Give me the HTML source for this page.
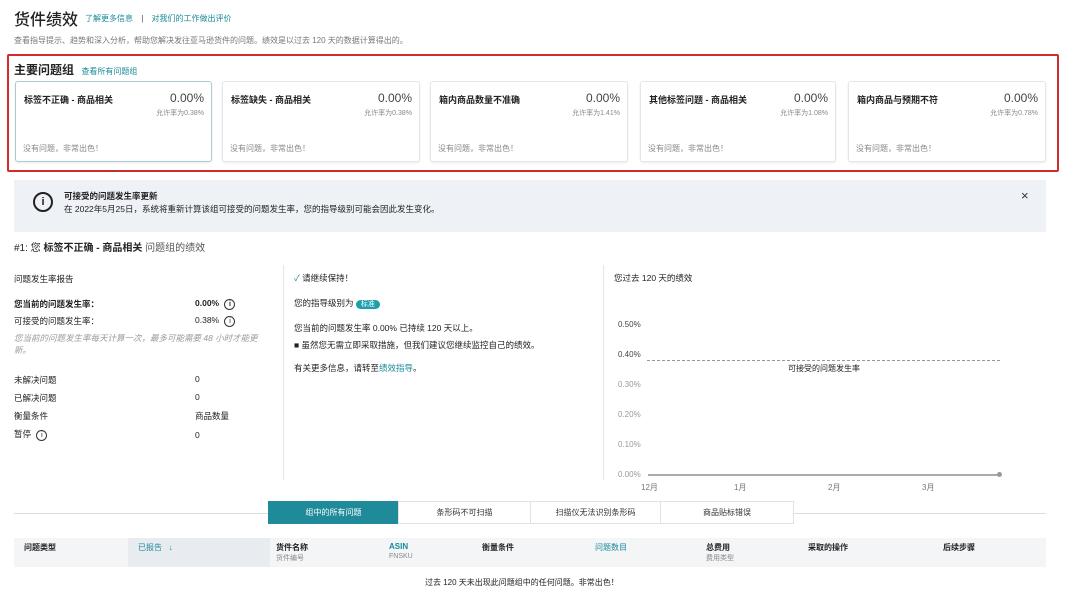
<!DOCTYPE html>
<html><head><meta charset="utf-8"><style>
*{margin:0;padding:0;box-sizing:border-box}
body{width:1080px;height:592px;background:#fff;font-family:"Liberation Sans","Noto Sans CJK SC",sans-serif;color:#222;position:relative;overflow:hidden;font-size:9px}
.a{position:absolute;white-space:nowrap}
.t{color:#1a8a99}
.g{color:#777}
.card{position:absolute;top:81px;height:81px;border:1px solid #e4e6e8;border-radius:3px;box-shadow:0 1px 2px rgba(0,0,0,.08);background:#fff}
.card .n{position:absolute;left:8px;top:11px;font-weight:bold;font-size:9px}
.card .p{position:absolute;right:7px;top:9px;font-size:12px;color:#444}
.card .s{position:absolute;right:7px;top:26px;font-size:7px;color:#888}
.card .f{position:absolute;left:7px;bottom:7px;font-size:8px;color:#888}
.vl{position:absolute;width:1px;background:#e6e6e6}
.tab{position:absolute;top:501px;height:23px;border:1px solid #e2e2e2;background:#fff;font-size:8px;text-align:center;line-height:22px;color:#333}
.th{position:absolute;top:542px;font-size:8px;font-weight:bold}
.ax{position:absolute;left:618px;font-size:8px;color:#999}
.l{font-size:8.5px}
</style></head><body>
<div class="a" style="left:14px;top:6px;font-size:16px;font-weight:500">货件绩效</div>
<div class="a t" style="left:85px;top:13px;font-size:8px">了解更多信息 <span style="color:#444;margin:0 6px">|</span> 对我们的工作做出评价</div>
<div class="a g" style="left:14px;top:35px;font-size:8px">查看指导提示、趋势和深入分析，帮助您解决发往亚马逊货件的问题。绩效是以过去 120 天的数据计算得出的。</div>

<div class="a" style="left:7px;top:54px;width:1052px;height:118px;border:2px solid #d22b2b;border-radius:2px"></div>
<div class="a" style="left:14px;top:61px;font-size:12px;font-weight:bold">主要问题组 <span class="t" style="font-size:8px;font-weight:normal;margin-left:4px">查看所有问题组</span></div>
<div class="card" style="left:15px;width:197px;border-color:#a9cdd0"><div class="n">标签不正确 - 商品相关</div><div class="p">0.00%</div><div class="s">允许率为0.38%</div><div class="f">没有问题，非常出色！</div></div>
<div class="card" style="left:222px;width:198px"><div class="n">标签缺失 - 商品相关</div><div class="p">0.00%</div><div class="s">允许率为0.38%</div><div class="f">没有问题，非常出色！</div></div>
<div class="card" style="left:430px;width:198px"><div class="n">箱内商品数量不准确</div><div class="p">0.00%</div><div class="s">允许率为1.41%</div><div class="f">没有问题，非常出色！</div></div>
<div class="card" style="left:640px;width:196px"><div class="n">其他标签问题 - 商品相关</div><div class="p">0.00%</div><div class="s">允许率为1.08%</div><div class="f">没有问题，非常出色！</div></div>
<div class="card" style="left:848px;width:198px"><div class="n">箱内商品与预期不符</div><div class="p">0.00%</div><div class="s">允许率为0.78%</div><div class="f">没有问题，非常出色！</div></div>
<div class="a" style="left:110px;top:165px;font-size:8px;color:#555">⌄</div>

<div class="a" style="left:14px;top:180px;width:1032px;height:52px;background:#eef1f5"></div>
<div class="a" style="left:33px;top:192px;width:20px;height:20px;border:2px solid #222;border-radius:50%;text-align:center;font-weight:bold;font-size:11px;line-height:16px">i</div>
<div class="a" style="left:64px;top:190px;font-size:8.5px;font-weight:bold">可接受的问题发生率更新</div>
<div class="a" style="left:64px;top:203px;font-size:8.5px">在 2022年5月25日，系统将重新计算该组可接受的问题发生率，您的指导级别可能会因此发生变化。</div>
<div class="a" style="left:1021px;top:188px;font-size:13px;color:#333">×</div>

<div class="a" style="left:14px;top:239px;font-size:10px">#1: 您 <b>标签不正确 - 商品相关</b> <span style="color:#555">问题组的绩效</span></div>
<div class="vl" style="left:283px;top:265px;height:215px"></div>
<div class="vl" style="left:603px;top:265px;height:215px"></div>

<div class="a l" style="left:14px;top:273px">问题发生率报告</div>
<div class="a l" style="left:14px;top:298px;font-weight:bold">您当前的问题发生率：</div>
<div class="a l" style="left:195px;top:298px;font-weight:bold">0.00% <span style="display:inline-block;width:11px;height:11px;border:1px solid #333;border-radius:50%;font-size:7px;text-align:center;line-height:9px;margin-left:3px">i</span></div>
<div class="a l" style="left:14px;top:315px">可接受的问题发生率：</div>
<div class="a l" style="left:195px;top:315px">0.38% <span style="display:inline-block;width:11px;height:11px;border:1px solid #333;border-radius:50%;font-size:7px;text-align:center;line-height:9px;margin-left:3px">i</span></div>
<div class="a l" style="left:14px;top:332px;color:#999;font-style:italic;white-space:normal;width:252px;line-height:12px">您当前的问题发生率每天计算一次，最多可能需要 48 小时才能更新。</div>
<div class="a l" style="left:14px;top:374px">未解决问题</div><div class="a l" style="left:195px;top:374px">0</div>
<div class="a l" style="left:14px;top:392px">已解决问题</div><div class="a l" style="left:195px;top:392px">0</div>
<div class="a l" style="left:14px;top:410px">衡量条件</div><div class="a l" style="left:195px;top:410px">商品数量</div>
<div class="a l" style="left:14px;top:428px">暂停 <span style="display:inline-block;width:11px;height:11px;border:1px solid #333;border-radius:50%;font-size:7px;text-align:center;line-height:9px;margin-left:3px">i</span></div><div class="a l" style="left:195px;top:430px">0</div>

<div class="a l" style="left:294px;top:272px"><span style="color:#1a8a99">✓</span> 请继续保持！</div>
<div class="a l" style="left:294px;top:297px">您的指导级别为 <span style="background:#1aa0ad;color:#fff;border-radius:7px;padding:1px 5px;font-size:7px">标准</span></div>
<div class="a l" style="left:294px;top:322px">您当前的问题发生率 0.00% 已持续 120 天以上。</div>
<div class="a l" style="left:294px;top:339px">■ 虽然您无需立即采取措施，但我们建议您继续监控自己的绩效。</div>
<div class="a l" style="left:294px;top:362px">有关更多信息，请转至<span class="t">绩效指导</span>。</div>

<div class="a l" style="left:614px;top:272px">您过去 120 天的绩效</div>
<div class="ax" style="top:320px;color:#444">0.50%</div>
<div class="ax" style="top:350px;color:#444">0.40%</div>
<div class="ax" style="top:380px">0.30%</div>
<div class="ax" style="top:410px">0.20%</div>
<div class="ax" style="top:440px">0.10%</div>
<div class="ax" style="top:470px">0.00%</div>
<div class="a" style="left:647px;top:360px;width:353px;border-top:1px dashed #999"></div>
<div class="a" style="left:788px;top:363px;font-size:8px">可接受的问题发生率</div>
<div class="a" style="left:648px;top:474px;width:352px;height:2px;background:#aaa"></div>
<div class="a" style="left:997px;top:472px;width:5px;height:5px;background:#999;border-radius:50%"></div>
<div class="a g" style="left:641px;top:482px;font-size:8px">12月</div>
<div class="a g" style="left:734px;top:482px;font-size:8px">1月</div>
<div class="a g" style="left:828px;top:482px;font-size:8px">2月</div>
<div class="a g" style="left:922px;top:482px;font-size:8px">3月</div>

<div class="a" style="left:14px;top:513px;width:1032px;height:1px;background:#ddd"></div>
<div class="tab" style="left:268px;width:131px;background:#1f8a99;border-color:#1f8a99;color:#fff">组中的所有问题</div>
<div class="tab" style="left:398px;width:133px">条形码不可扫描</div>
<div class="tab" style="left:530px;width:131px">扫描仪无法识别条形码</div>
<div class="tab" style="left:660px;width:134px">商品贴标错误</div>

<div class="a" style="left:14px;top:538px;width:1032px;height:29px;background:#f4f5f7"></div>
<div class="a" style="left:128px;top:538px;width:142px;height:29px;background:#e8ecf0"></div>
<div class="th" style="left:24px">问题类型</div>
<div class="th t" style="left:138px;font-weight:normal">已报告 &nbsp; ↓</div>
<div class="th" style="left:276px">货件名称<br><span style="font-weight:normal;color:#888;font-size:7px">货件编号</span></div>
<div class="th t" style="left:389px">ASIN<br><span style="font-weight:normal;color:#888;font-size:7px">FNSKU</span></div>
<div class="th" style="left:482px">衡量条件</div>
<div class="th t" style="left:595px;font-weight:normal">问题数目</div>
<div class="th" style="left:706px">总费用<br><span style="font-weight:normal;color:#888;font-size:7px">费用类型</span></div>
<div class="th" style="left:808px">采取的操作</div>
<div class="th" style="left:943px">后续步骤</div>
<div class="a" style="left:425px;top:577px;font-size:8px">过去 120 天未出现此问题组中的任何问题。非常出色！</div>
</body></html>
